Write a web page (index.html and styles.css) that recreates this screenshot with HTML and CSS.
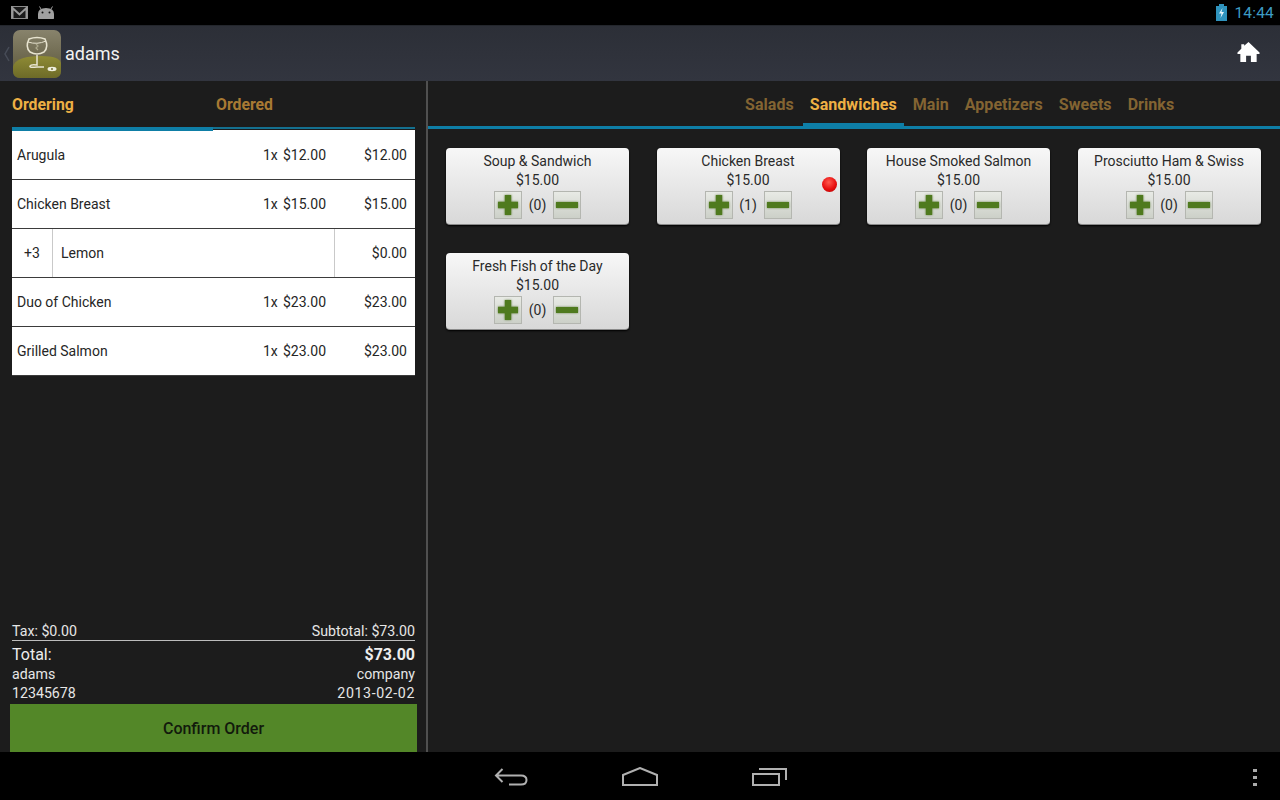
FILE: index.html
```html
<!DOCTYPE html>
<html lang="en">
<head>
<meta charset="utf-8">
<title>adams</title>
<link rel="stylesheet" href="styles.css">
</head>
<body>
<div class="screen">
  <header class="status">
    <div class="status-left">
      <svg class="ic-mail" width="17" height="13" viewBox="0 0 17 13"><rect x="0.500" y="0.500" width="16" height="12" fill="#1a1a1a" stroke="#8c8c8c"/><path d="M1.500 12V2l7 6.500L15.500 2v10" fill="none" stroke="#9a9a9a" stroke-width="2"/></svg>
      <svg class="ic-droid" width="18" height="14" viewBox="0 0 18 14"><path d="M4 3L2.500 0.500M14 3l1.500-2.500" stroke="#a0a0a0" stroke-width="1"/><path d="M1 12Q0.500 13 2 13H16Q17.500 13 17 12V8Q17 2 9 2T1 8z" fill="#a0a0a0"/><circle cx="5.500" cy="6.500" r="1" fill="#111"/><circle cx="12.500" cy="6.500" r="1" fill="#111"/></svg>
    </div>
    <div class="status-right">
      <svg width="11" height="17" viewBox="0 0 11 17"><path d="M3 0h5v2h3v15H0V2h3z" fill="#2f93bd"/><path d="M6.500 4L3 9.500h2.500L4.500 14 8 8H5.500z" fill="#e8f6fb"/></svg>
      <span class="clock">14:44</span>
    </div>
  </header>

  <div class="actionbar">
    <svg class="back" width="6" height="16" viewBox="0 0 6 16"><path d="M5 1L1 8l4 7" fill="none" stroke="#474c57" stroke-width="1.500"/></svg>
    <svg class="logo" width="48" height="48" viewBox="0 0 48 48">
      <defs>
        <linearGradient id="lg" x1="0" y1="0" x2="0" y2="1"><stop offset="0" stop-color="#88836c"/><stop offset="0.55" stop-color="#6f6a50"/><stop offset="1" stop-color="#5f5b3a"/></linearGradient>
        <linearGradient id="lf" x1="0" y1="0" x2="0" y2="1"><stop offset="0" stop-color="#8f8b35"/><stop offset="1" stop-color="#6d6a28"/></linearGradient>
      </defs>
      <rect width="48" height="48" rx="7" fill="url(#lg)"/>
      <path d="M0 37Q2 27 24 26T48 33V41Q48 48 41 48H7Q0 48 0 41z" fill="url(#lf)"/>
      <path d="M16 9Q12 17 17 22Q24 26 31 22Q36 17 32 9Q24 6 16 9Z" fill="none" stroke="#e8e4d0" stroke-width="1.600"/>
      <path d="M15 12Q24 15 33 11" fill="none" stroke="#e8e4d0" stroke-width="1"/>
      <path d="M24 25V35Q18 34 17 36T24 37h7" fill="none" stroke="#e8e4d0" stroke-width="1.500"/>
      <path d="M23 14l2 2-2 2 2 2" fill="none" stroke="#aca88c" stroke-width="1.200"/>
      <ellipse cx="39" cy="39" rx="4.500" ry="2.200" fill="#eeeedd"/>
      <circle cx="39" cy="39" r="1" fill="#77733a"/>
    </svg>
    <span class="title">adams</span>
    <svg class="home" width="23" height="22" viewBox="0 0 24 22"><path d="M12 0.500L23.500 11.500V13H20.500V21.500H14.500V15H9.500V21.500H3.500V13H0.500V11.500L4.500 7.500V3H7.500V4.500z" fill="#fff"/></svg>
  </div>

  <main class="main">
    <section class="left">
      <div class="tabs">
        <div class="tab tab-on">Ordering</div>
        <div class="tab">Ordered</div>
      </div>
      <div class="order-list">
        <div class="row"><span class="r-name">Arugula</span><span class="r-qty">1x</span><span class="r-unit">$12.00</span><span class="r-total">$12.00</span></div>
        <div class="row"><span class="r-name">Chicken Breast</span><span class="r-qty">1x</span><span class="r-unit">$15.00</span><span class="r-total">$15.00</span></div>
        <div class="row row-sub"><span class="s-qty">+3</span><span class="s-name">Lemon</span><span class="s-total">$0.00</span></div>
        <div class="row"><span class="r-name">Duo of Chicken</span><span class="r-qty">1x</span><span class="r-unit">$23.00</span><span class="r-total">$23.00</span></div>
        <div class="row"><span class="r-name">Grilled Salmon</span><span class="r-qty">1x</span><span class="r-unit">$23.00</span><span class="r-total">$23.00</span></div>
      </div>
      <div class="summary">
        <div class="line line-tax"><span>Tax: $0.00</span><span>Subtotal: $73.00</span></div>
        <div class="line line-total"><span>Total:</span><b>$73.00</b></div>
        <div class="line line-info"><span>adams</span><span>company</span></div>
        <div class="line line-info"><span>12345678</span><span class="date">2013-02-02</span></div>
      </div>
      <button class="confirm">Confirm Order</button>
    </section>

    <section class="right">
      <nav class="cats">
        <span class="cat">Salads</span>
        <span class="cat cat-on">Sandwiches</span>
        <span class="cat">Main</span>
        <span class="cat">Appetizers</span>
        <span class="cat">Sweets</span>
        <span class="cat">Drinks</span>
      </nav>
      <div class="grid">
        <article class="card">
          <div class="c-name">Soup &amp; Sandwich</div><div class="c-price">$15.00</div>
          <div class="stepper"><button class="step"><svg class="glyph" width="20" height="20" viewBox="0 0 20 20"><path d="M6.800 0h6.400v6.800H20v6.400h-6.800V20H6.800v-6.800H0V6.800h6.800z" fill="#4f7a1e"/></svg></button><span class="count">(0)</span><button class="step"><svg class="glyph" width="22" height="6" viewBox="0 0 22 6"><rect width="22" height="6" fill="#4f7a1e"/></svg></button></div>
        </article>
        <article class="card">
          <div class="c-name">Chicken Breast</div><div class="c-price">$15.00</div>
          <div class="stepper"><button class="step"><svg class="glyph" width="20" height="20" viewBox="0 0 20 20"><path d="M6.800 0h6.400v6.800H20v6.400h-6.800V20H6.800v-6.800H0V6.800h6.800z" fill="#4f7a1e"/></svg></button><span class="count">(1)</span><button class="step"><svg class="glyph" width="22" height="6" viewBox="0 0 22 6"><rect width="22" height="6" fill="#4f7a1e"/></svg></button></div>
          <span class="dot"></span>
        </article>
        <article class="card">
          <div class="c-name">House Smoked Salmon</div><div class="c-price">$15.00</div>
          <div class="stepper"><button class="step"><svg class="glyph" width="20" height="20" viewBox="0 0 20 20"><path d="M6.800 0h6.400v6.800H20v6.400h-6.800V20H6.800v-6.800H0V6.800h6.800z" fill="#4f7a1e"/></svg></button><span class="count">(0)</span><button class="step"><svg class="glyph" width="22" height="6" viewBox="0 0 22 6"><rect width="22" height="6" fill="#4f7a1e"/></svg></button></div>
        </article>
        <article class="card">
          <div class="c-name">Prosciutto Ham &amp; Swiss</div><div class="c-price">$15.00</div>
          <div class="stepper"><button class="step"><svg class="glyph" width="20" height="20" viewBox="0 0 20 20"><path d="M6.800 0h6.400v6.800H20v6.400h-6.800V20H6.800v-6.800H0V6.800h6.800z" fill="#4f7a1e"/></svg></button><span class="count">(0)</span><button class="step"><svg class="glyph" width="22" height="6" viewBox="0 0 22 6"><rect width="22" height="6" fill="#4f7a1e"/></svg></button></div>
        </article>
        <article class="card">
          <div class="c-name">Fresh Fish of the Day</div><div class="c-price">$15.00</div>
          <div class="stepper"><button class="step"><svg class="glyph" width="20" height="20" viewBox="0 0 20 20"><path d="M6.800 0h6.400v6.800H20v6.400h-6.800V20H6.800v-6.800H0V6.800h6.800z" fill="#4f7a1e"/></svg></button><span class="count">(0)</span><button class="step"><svg class="glyph" width="22" height="6" viewBox="0 0 22 6"><rect width="22" height="6" fill="#4f7a1e"/></svg></button></div>
        </article>
      </div>
    </section>
  </main>

  <footer class="navbar">
    <svg width="34" height="20" viewBox="0 0 34 20"><path d="M2 8.500h25Q32.500 8.500 32.500 13T27 17.500H15M8.500 2L2 8.500 8.500 15" fill="none" stroke="#b0b0b0" stroke-width="2"/></svg>
    <svg width="36" height="20" viewBox="0 0 36 20"><path d="M1 18V8L18 1l17 7v10z" fill="none" stroke="#b0b0b0" stroke-width="2"/></svg>
    <svg width="36" height="20" viewBox="0 0 36 20"><rect x="1" y="7" width="26" height="11" fill="none" stroke="#b0b0b0" stroke-width="2"/><path d="M7 2h27v11" fill="none" stroke="#b0b0b0" stroke-width="2"/></svg>
    <div class="more"><i></i><i></i><i></i></div>
  </footer>
</div>
</body>
</html>
```
FILE: styles.css
```css
* { box-sizing: border-box; }
html, body { margin: 0; padding: 0; }
body { font-family: Roboto, "Liberation Sans", sans-serif; background: #000; }
.screen { width: 1280px; height: 800px; display: flex; flex-direction: column; overflow: hidden; position: relative; }

.status { height: 25px; background: #000; display: flex; justify-content: space-between; align-items: center; padding: 0 6px 0 11px; flex: none; }
.status-left { display: flex; align-items: center; gap: 9px; }
.status-right { display: flex; align-items: center; gap: 7px; }
.clock { color: #3d9cc4; font-size: 15.500px; letter-spacing: .2px; }

.actionbar { height: 56px; flex: none; display: flex; align-items: center; background: linear-gradient(#2c2f37, #32353f); border-top: 1px solid #23262c; padding-left: 4px; }
.back { margin-right: 3px; }
.logo { margin-right: 4px; }
.title { color: #f2f2f2; font-size: 18px; }
.home { margin: 0 20px 3px auto; }

.main { flex: 1; min-height: 0; display: flex; background: #1c1c1c; }
.left { width: 428px; flex: none; border-right: 2px solid #505050; display: flex; flex-direction: column; padding: 0 10px; }

.tabs { height: 48px; margin: 0 1px 0 2px; display: flex; flex: none; border-bottom: 2px solid #14708f; }
.tab { flex: 1; padding: 14px 0 0 3px; font-size: 15.800px; font-weight: 700; color: #a87a33; }
.tab-on { flex: 0 0 201px; height: 50px; position: relative; color: #eeb044; padding: 14px 0 0; border-bottom: 4px solid #0e7ea6; }

.order-list { margin: 1px 1px 0 2px; background: #fff; flex: none; }
.row { height: 49px; display: flex; align-items: center; font-size: 14px; color: #262626; border-bottom: 1px solid #3b3b3b; background: #fff; padding: 0 8px 0 5px; }
.row:first-child { height: 50px; padding-top: 1px; }
.r-name { flex: 1; }
.r-qty { width: 20px; }
.r-unit { width: 44px; }
.r-total { width: 80px; text-align: right; }
.row-sub { padding: 0; align-items: stretch; }
.row-sub span { display: flex; align-items: center; }
.s-qty { width: 41px; justify-content: center; border-right: 1px solid #c9c9c9; }
.s-name { flex: 1; padding-left: 8px; border-right: 1px solid #c9c9c9; }
.s-total { width: 80px; justify-content: flex-end; padding-right: 8px; }

.summary { margin-top: auto; margin-bottom: 1px; padding: 0 1px 0 2px; color: #e6e6e6; flex: none; }
.line { display: flex; justify-content: space-between; }
.line-tax { font-size: 14.200px; height: 19px; line-height: 18px; border-bottom: 1px solid #bdbdbd; }
.line-total { font-size: 16px; height: 24px; align-items: center; color: #ededed; padding-top: 2px; }
.line-total b { font-weight: 700; }
.line-info { font-size: 14.200px; height: 19px; line-height: 19px; }
.date { letter-spacing: .6px; }
.confirm { flex: none; height: 48px; width: 407px; border: 0; padding: 0; background: #538728; color: #121a0c; font: 500 16px Roboto, "Liberation Sans", sans-serif; }

.right { flex: 1; min-width: 0; display: flex; flex-direction: column; }
.cats { height: 48px; flex: none; border-bottom: 3px solid #0e7ea6; display: flex; padding-left: 309px; font-size: 16px; font-weight: 700; letter-spacing: .05px; color: #836432; }
.cat { padding: 14px 8px 0; height: 45px; }
.cat-on { color: #eeb044; height: 48px; padding: 14px 7px 0; margin: 0 1px; border-bottom: 6px solid #0e7ea6; }

.grid { padding: 19px 19px 0 18px; display: grid; grid-template-columns: repeat(4, 183px); column-gap: 27.500px; row-gap: 28px; align-content: start; }
.card { height: 77px; border-radius: 4px; background: linear-gradient(#f7f7f7, #d8d8d8); border-bottom: 1px solid #8a8a8a; box-shadow: 0 1px 2px #000; position: relative; text-align: center; color: #2a2a2a; font-size: 14px; padding-top: 4px; }
.c-name, .c-price { height: 19px; line-height: 19px; }
.stepper { display: flex; justify-content: center; align-items: center; margin-top: 1px; }
.step { width: 28px; height: 28px; padding: 0; border: 1px solid #b4b6b0; background: linear-gradient(#e8eae5, #ccd0c8); display: flex; align-items: center; justify-content: center; }
.glyph { filter: drop-shadow(0 0 1px #6f8a50); }
.count { width: 31px; text-align: center; }
.dot { position: absolute; right: 3px; top: 29px; width: 15px; height: 15px; border-radius: 50%; background: radial-gradient(circle at 45% 35%, #ff5a4f, #e80f0f 55%, #a80000); }

.navbar { height: 48px; flex: none; background: #000; position: relative; display: flex; justify-content: center; align-items: center; gap: 94px; padding: 2px 0 0 2px; }
.more { position: absolute; right: 23px; top: 17px; display: flex; flex-direction: column; gap: 4px; }
.more i { display: block; width: 4px; height: 3px; background: #aaa; }
```
